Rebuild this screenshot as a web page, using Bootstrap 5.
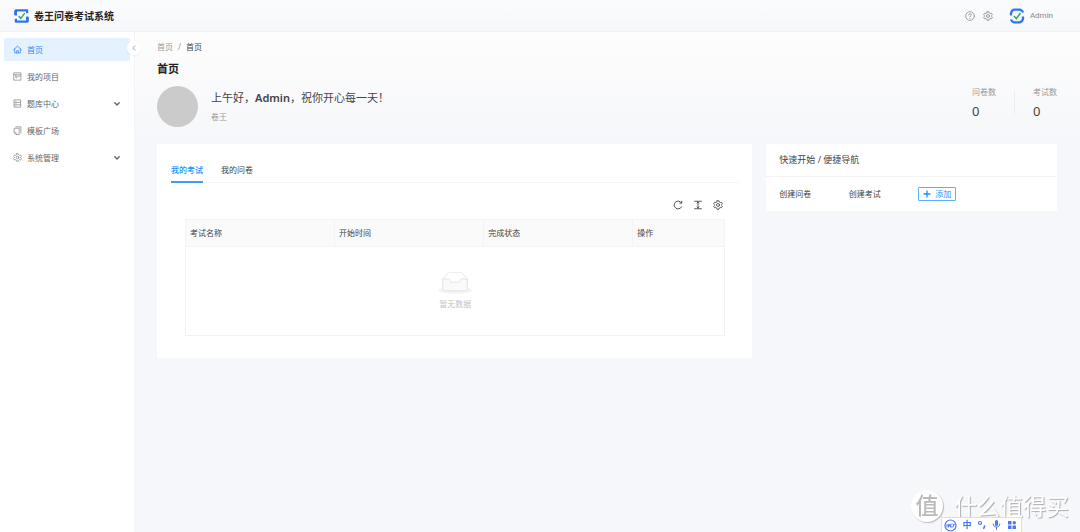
<!DOCTYPE html>
<html lang="zh-CN">
<head>
<meta charset="utf-8">
<meta name="viewport" content="width=device-width, initial-scale=1">
<title>卷王问卷考试系统</title>
<link href="https://cdn.jsdelivr.net/npm/bootstrap@5.3.0/dist/css/bootstrap.min.css" rel="stylesheet">
<style>
body{font-family:"Noto Sans","Noto Sans CJK SC",sans-serif;font-size:8px;line-height:12px;color:#444;background:#f6f7fa}
svg{display:block;flex:none}
a{text-decoration:none;color:inherit}
button{font:inherit;line-height:inherit}
.ln{fill:none;stroke:currentColor;stroke-linecap:round;stroke-linejoin:round}
.topbar{height:32px;padding:0 27px 0 14px;background:linear-gradient(#fbfcfd,#f6f7fa);border-bottom:1px solid #f0f1f3;color:#888}
.brand{font-size:10px;color:#222;gap:5px}
.user{font-family:Roboto,sans-serif;gap:5px}
.tool{border:0;background:none;padding:0;color:inherit;display:block}
.sidebar{width:135px;background:#fff;border-right:1px solid #f3f4f6;padding:6px 4px;position:relative}
.sidebar .nav{gap:4px}
.sidebar .nav-link{height:23px;padding:0 9px;display:flex;align-items:center;gap:5px;color:#666;border-radius:2px;width:100%;border:0;background:none;line-height:12px;font-size:8px}
.sidebar .nav-link svg:first-child{color:#888}
.sidebar .nav-link.active,.sidebar .nav-link.active svg:first-child{background:#e4f1fe;color:#3a86fa}
.collapser{position:absolute;right:-7px;top:9px;width:14px;height:14px;border:0;border-radius:50%;background:#fff;box-shadow:0 1px 3px #0000000d;padding:4px;color:#aaa}
.page-main{min-width:0;padding:9px 23px 16px 22px;background:linear-gradient(#fdfdfd,#f6f7fa 112px)}
.breadcrumb{font-size:8px;margin:0 0 8px;--bs-breadcrumb-item-padding-x:5px;--bs-breadcrumb-divider-color:#999}
.breadcrumb-item{color:#999}
.breadcrumb-item.active{color:#444}
.page-title{font-size:11px;line-height:16px;color:#222;margin:0 0 9px}
.welcome{gap:13px}
.avatar{width:41px;height:41px;background:#cbcbcb}
.greeting{font-size:11px;line-height:16px}
.muted{color:#999}
.stats{gap:18px}
.stat{width:24px}
.stat b{font-size:13px;line-height:16px;margin-top:5px;font-weight:400;color:#444}
.rule{width:1px;height:24px;background:#ededf0}
.panels{--bs-gutter-x:14px;margin-top:17px}
.panel{background:#fff;border:0;border-radius:0;color:#444}
.exam-panel{padding:20px 14px 22px}
.exam-tabs{--bs-nav-tabs-border-color:#f3f3f3;gap:18px}
.exam-tabs .nav-link{border:0;border-bottom:2px solid transparent;border-radius:0;padding:0 0 5px;color:#444;background:none;font-size:8px;line-height:12px}
.exam-tabs .nav-link.active{color:#1890ff;border-color:#3a9fff;font-weight:500}
.exam-list{padding:0 13px 0 14px}
.list-tools{gap:10px;padding:17px 2px 9px}
.exam-table{table-layout:fixed;margin:0;border-color:#f3f3f3;font-size:8px}
.exam-table th{font-weight:400;padding:7px 4px;background:#fafafa;color:#444}
.exam-table td{height:89px;padding:0;text-align:center;vertical-align:middle;color:#c4c4c4}
.act-col{width:92px}
.panel-title{font-size:9px;line-height:14px;padding:9px 13px;margin:0;font-weight:400;border-bottom:1px solid #f3f3f3}
.quick{padding:10px 0 10px 13px;display:grid;grid-template-columns:repeat(4,1fr);align-items:center}
.add-btn{--bs-btn-color:#1890ff;--bs-btn-border-color:#5ab0ff;border-radius:1px;padding:0 4px;font-size:8px;line-height:12px;display:inline-flex;align-items:center;gap:4px;white-space:nowrap}
.watermark{position:fixed;right:11px;bottom:10px;gap:11px;color:#fff;font-size:23px;line-height:24px;text-shadow:1px 1px 1px #aaa;pointer-events:none}
.wm-seal{width:32px;height:32px;background:#fff;color:#bbb;border-radius:50%;text-align:center;line-height:31px;font-size:23px;font-weight:500;box-shadow:1px 1px 1px #bbb;text-shadow:none}
.ime{position:fixed;right:58px;bottom:0;width:81px;height:15px;background:#fff;border:1px solid #dedfe3;border-bottom:0;padding:0 4px 0 2px;color:#4a76f5;font-size:9px;line-height:10px}
</style>
</head>
<body class="min-vh-100 d-flex flex-column">
<svg width="0" height="0" class="position-absolute" aria-hidden="true">
<symbol id="logo" viewBox="0 0 16 16"><path d="M2 7.500V2h12v3M14 8.500V14H2v-3" fill="none" stroke="#2f73f6" stroke-width="2.400" stroke-linejoin="round"/><path d="M.8 2v5M15.200 9v5" stroke="#2f73f6" stroke-width="1.200"/><path d="m5 8 2.300 2.500L11.500 5" fill="none" stroke="#27ae60" stroke-width="1.500"/></symbol>
<symbol id="logo-round" viewBox="0 0 16 16"><path d="M2 7.500V5Q2.500 2.500 5 1.700H11Q13.500 2.500 14 4.500M14 8.500V11Q13.500 13.500 11 14.300H5Q2.500 13.500 2 11.500" fill="none" stroke="#2f73f6" stroke-width="2.300"/><path d="m5 8 2.300 2.500L11.500 5" fill="none" stroke="#27ae60" stroke-width="1.500"/></symbol>
<symbol id="gear" viewBox="0 0 16 16"><path class="ln" stroke-width="1.300" d="M6.500 1.200h3l.5 2 1.500.9 2-.6 1.500 2.600-1.500 1.400v1l1.500 1.400-1.500 2.600-2-.6-1.500.9-.5 2h-3l-.5-2-1.500-.9-2 .6L1 9.900l1.500-1.400v-1L1 6.100l1.500-2.600 2 .6L6 3.200z"/><circle class="ln" stroke-width="1.300" cx="8" cy="8" r="2.400"/></symbol>
<symbol id="down" viewBox="0 0 8 8"><path class="ln" stroke-width="1.400" d="m1.800 2.800 2.200 2.200 2.200-2.200"/></symbol>
</svg>

<header class="topbar d-flex align-items-center justify-content-between">
  <a href="#" class="brand d-flex align-items-center fw-bold"><svg width="15" height="16"><use href="#logo"/></svg>卷王问卷考试系统</a>
  <div class="d-flex align-items-center">
    <button class="tool me-2" aria-label="帮助"><svg width="10" height="10" viewBox="0 0 16 16"><circle class="ln" stroke-width="1.200" cx="8" cy="8" r="7"/><path class="ln" stroke-width="1.300" d="M5.800 6.300C6 3.600 10.200 3.800 10.200 6.300 10.200 7.800 8 7.800 8 9.500M8 11.700v.2"/></svg></button>
    <button class="tool me-3" aria-label="设置"><svg width="10" height="10"><use href="#gear"/></svg></button>
    <a href="#" class="user d-flex align-items-center"><svg width="16" height="16"><use href="#logo-round"/></svg>Admin</a>
  </div>
</header>

<div class="d-flex flex-grow-1">
  <aside class="sidebar flex-shrink-0">
    <nav class="nav flex-column">
      <a class="nav-link active" href="#" aria-current="page"><svg width="9" height="9" viewBox="0 0 16 16"><path class="ln" stroke-width="1.400" d="M1 8.500 8 2l7 6.500M3 7v7h10V7M6.500 14v-4h3v4"/></svg>首页</a>
      <a class="nav-link" href="#"><svg width="9" height="9" viewBox="0 0 16 16"><path class="ln" stroke-width="1.300" d="M2 1.500h12v13H2zM2 5h12M5 5v5h2V7.500M9.500 7.500H12"/></svg>我的项目</a>
      <button class="nav-link" aria-expanded="false"><svg width="9" height="9" viewBox="0 0 16 16"><path class="ln" stroke-width="1.300" d="M2.500 1.500h11v13h-11zM2.500 6h11M2.500 10.300h11M5 3.800h.5M5 8.200h.5M5 12.500h.5"/></svg>题库中心<svg class="ms-auto" width="8" height="8"><use href="#down"/></svg></button>
      <a class="nav-link" href="#"><svg width="9" height="9" viewBox="0 0 16 16"><path class="ln" stroke-width="1.300" d="M5 1.500h9v11M2.500 4H11v11H5.500l-3-3zM2.500 12h3v3"/></svg>模板广场</a>
      <button class="nav-link" aria-expanded="false"><svg width="9" height="9"><use href="#gear"/></svg>系统管理<svg class="ms-auto" width="8" height="8"><use href="#down"/></svg></button>
    </nav>
    <button class="collapser" aria-label="收起菜单"><svg width="6" height="6" viewBox="0 0 6 6"><path class="ln" d="M4 .8 1.800 3 4 5.200"/></svg></button>
  </aside>

  <main class="page-main flex-grow-1">
    <nav aria-label="breadcrumb"><ol class="breadcrumb"><li class="breadcrumb-item"><a href="#">首页</a></li><li class="breadcrumb-item active" aria-current="page">首页</li></ol></nav>
    <h1 class="page-title fw-bold">首页</h1>
    <section class="welcome d-flex">
      <div class="avatar rounded-circle flex-shrink-0"></div>
      <div class="d-flex flex-column justify-content-between pt-1">
        <div class="greeting">上午好，<span class="fw-semibold">Admin</span>，祝你开心每一天！</div>
        <div class="muted mb-1">卷王</div>
      </div>
      <div class="stats ms-auto d-flex">
        <div class="stat d-flex flex-column"><span class="muted">问卷数</span><b>0</b></div>
        <div class="rule mt-1"></div>
        <div class="stat d-flex flex-column"><span class="muted">考试数</span><b>0</b></div>
      </div>
    </section>

    <div class="row panels">
      <div class="col-8">
        <section class="card panel exam-panel">
          <div class="nav nav-tabs exam-tabs" role="tablist">
            <button class="nav-link active" role="tab" aria-selected="true">我的考试</button>
            <button class="nav-link" role="tab" aria-selected="false">我的问卷</button>
          </div>
          <div class="exam-list">
            <div class="list-tools d-flex justify-content-end">
              <button class="tool" aria-label="刷新"><svg width="10" height="10" viewBox="0 0 16 16"><path class="ln" stroke-width="1.500" d="M13.800 11A6.300 6.300 0 1 1 13.500 4.500M14 2v3h-3"/></svg></button>
              <button class="tool" aria-label="密度"><svg width="10" height="10" viewBox="0 0 16 16"><path class="ln" stroke-width="1.400" d="M2.500 2h11M2.500 14h11M8 3v10M6.500 4.800 8 3.300l1.500 1.500M6.500 11.200 8 12.700l1.500-1.500"/></svg></button>
              <button class="tool" aria-label="列设置"><svg width="10" height="10"><use href="#gear"/></svg></button>
            </div>
            <table class="table table-bordered exam-table">
              <thead><tr><th>考试名称</th><th>开始时间</th><th>完成状态</th><th class="act-col">操作</th></tr></thead>
              <tbody><tr><td colspan="4">
                <svg class="mx-auto mb-1" width="34" height="22" viewBox="0 0 64 41"><ellipse cx="32" cy="34" rx="32" ry="7" fill="#f4f4f4"/><g stroke="#dcdcdc" stroke-width="1.400"><path d="M55 12.800 44.900 1.300C44.400.5 43.700 0 42.900 0H21.100c-.8 0-1.500.5-2 1.300L9 12.800V22h46z" fill="#fff"/><path d="M41.600 16c0-1.700 1-3 2.200-3H55v18c0 2.200-1.300 4-3 4H12c-1.700 0-3-1.800-3-4V13h11.200c1.200 0 2.200 1.300 2.200 3s1 3 2.200 3h14.800c1.200 0 2.200-1.300 2.200-3z" fill="#fafafa"/></g></svg>暂无数据
              </td></tr></tbody>
            </table>
          </div>
        </section>
      </div>
      <div class="col-4">
        <section class="card panel">
          <h2 class="panel-title">快速开始 / 便捷导航</h2>
          <div class="quick"><a href="#">创建问卷</a><a href="#">创建考试</a><div><button class="btn btn-outline-primary add-btn"><svg width="8" height="8" viewBox="0 0 8 8"><path class="ln" stroke-width="1.300" d="M1 4h6M4 1v6"/></svg>添加</button></div></div>
        </section>
      </div>
    </div>
  </main>
</div>

<div class="watermark d-flex align-items-center"><span class="wm-seal">值</span><span>什么值得买</span></div>
<div class="ime d-flex align-items-center justify-content-between">
  <svg width="13" height="13" viewBox="0 0 26 26"><circle class="ln" stroke-width="2.400" cx="13" cy="13" r="11"/><path class="ln" stroke-width="2" d="M6 11v5M9 16v-5h3l-1 3H9M14 10l-1 6h3M18 10l1 3 2-3M19 13l-1 3"/></svg>
  <span class="fw-bold">中</span>
  <svg width="10" height="10" viewBox="0 0 10 10"><circle class="ln" stroke-width="1.200" cx="3" cy="3" r="1.500"/><path class="ln" stroke-width="1.600" d="M7.500 6v.6L6.800 8.200"/></svg>
  <svg width="9" height="10" viewBox="0 0 9 10"><rect x="3" y="0" width="3" height="6" rx="1.500" fill="currentColor"/><path class="ln" d="M1.200 4c0 4.200 6.600 4.200 6.600 0M4.500 7.500v2"/></svg>
  <svg width="10" height="10" viewBox="0 0 10 10" fill="currentColor"><path d="M1 1h3.500v3.500H1zM1 5.500h3.500V9H1zM5.500 5.500H9V9H5.500z"/><circle cx="7.300" cy="2.700" r="1.700"/></svg>
</div>
<script src="https://cdn.jsdelivr.net/npm/bootstrap@5.3.0/dist/js/bootstrap.bundle.min.js"></script>
</body>
</html>
